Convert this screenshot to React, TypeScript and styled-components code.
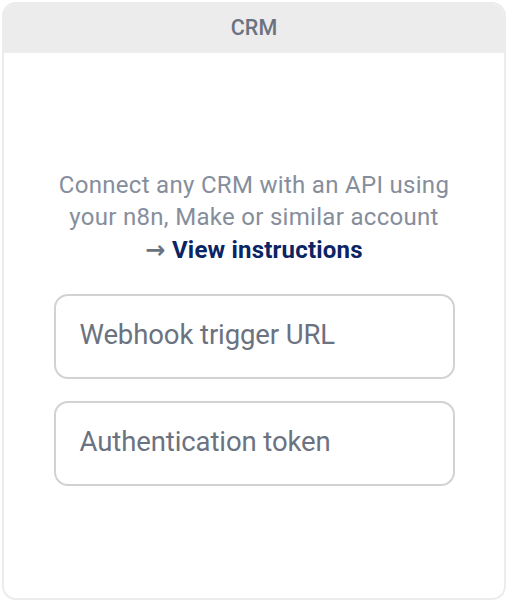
import React from "react";
import styled, { createGlobalStyle } from "styled-components";

const Global = createGlobalStyle`
  html, body { margin: 0; padding: 0; background: #ffffff; }
  body { font-family: Roboto, "Liberation Sans", sans-serif; }
  * { box-sizing: border-box; }
`;

const Card = styled.div`
  margin: 2px;
  width: 504px;
  height: 598px;
  border: 2px solid #ececec;
  border-radius: 14px;
  overflow: hidden;
  display: flex;
  flex-direction: column;
  background: #ffffff;
`;

const Header = styled.div`
  height: 49px;
  background: #ececec;
  display: flex;
  align-items: center;
  justify-content: center;
  color: #6b7280;
  font-size: 21.5px;
  font-weight: 500;
  padding-bottom: 2px;
`;

const Body = styled.div`
  flex: 1;
  display: flex;
  flex-direction: column;
  align-items: center;
  justify-content: center;
  padding-top: 4px;
`;

const Description = styled.p`
  margin: 0 0 28px;
  text-align: center;
  color: #868e9c;
  font-size: 24px;
  letter-spacing: 0.3px;
  line-height: 32px;
`;

const LinkLine = styled.span`
  display: inline-block;
  margin-top: 1px;
`;

const Link = styled.a`
  color: #0b2463;
  font-weight: 700;
  letter-spacing: 0.2px;
  text-decoration: none;
`;

const Arrow = styled.span`
  color: #6b7280;
  font-family: "DejaVu Sans", sans-serif;
  font-weight: 700;
  font-size: 24px;
`;

const Fields = styled.div`
  display: flex;
  flex-direction: column;
  gap: 22px;
  width: 401px;
`;

const Field = styled.div`
  height: 85px;
  border: 2px solid #d2d2d2;
  border-radius: 14px;
  display: flex;
  align-items: center;
  padding: 0 0 4px 24px;
  color: #6b7280;
  font-size: 27.5px;
  letter-spacing: -0.1px;
`;

export default function App() {
  return (
    <>
      <Global />
      <Card>
        <Header>CRM</Header>
        <Body>
          <Description>
            Connect any CRM with an API using
            <br />
            your n8n, Make or similar account
            <br />
            <LinkLine>
              <Arrow>→</Arrow> <Link href="#">View instructions</Link>
            </LinkLine>
          </Description>
          <Fields>
            <Field>Webhook trigger URL</Field>
            <Field>Authentication token</Field>
          </Fields>
        </Body>
      </Card>
    </>
  );
}
